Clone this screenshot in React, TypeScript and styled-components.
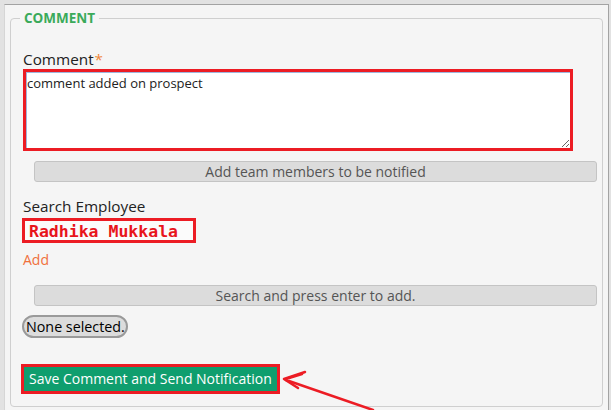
import React from "react";
import styled, { createGlobalStyle } from "styled-components";

const Global = createGlobalStyle`
  html, body {
    margin: 0;
    padding: 0;
    background: #e2e2e2;
    overflow: hidden;
  }
  body {
    font-family: "Open Sans", "Liberation Sans", sans-serif;
  }
`;

const Page = styled.div`
  position: relative;
  width: 611px;
  height: 410px;
  overflow: hidden;
`;

const Panel = styled.div`
  margin: 4px 2px 0 4px;
  background: #f5f5f5;
  border-top: 1px solid #a3a3a3;
  border-right: 1px solid #a3a3a3;
  border-left: 1px solid #d6d6d6;
  padding: 5px 5px 30px 5px;
`;

const Fieldset = styled.fieldset`
  margin: 0;
  min-width: 0;
  border: 1px solid #cfcfcf;
  border-radius: 4px;
  padding: 0 5px 12px 12px;
`;

const Legend = styled.legend`
  margin-left: -3px;
  padding: 0 4px;
  font-size: 13.5px;
  line-height: 16px;
  font-weight: 700;
  color: #3aaa5a;
`;

const Column = styled.div`
  display: flex;
  flex-direction: column;
  align-items: stretch;
`;

const Label = styled.label<{ $top: number }>`
  display: block;
  margin-top: ${(p) => p.$top}px;
  font-size: 15.3px;
  line-height: 19px;
  color: #222;
`;

const Required = styled.span`
  color: #f0883c;
  margin-left: 1px;
`;

const CommentArea = styled.textarea`
  display: block;
  box-sizing: border-box;
  width: 550px;
  height: 82px;
  margin: 0;
  border: 3px solid #ec1c24;
  box-shadow: inset 1px 1px 0 #9fb6dd;
  background: #fff;
  padding: 3px 1px;
  font-family: "Open Sans", "Liberation Sans", sans-serif;
  font-size: 13px;
  line-height: 16px;
  color: #222;
  resize: both;
  outline: none;
`;

const HintBar = styled.div<{ $top: number }>`
  box-sizing: border-box;
  margin: ${(p) => p.$top}px 0 0 11px;
  height: 21px;
  background: #dcdcdc;
  border: 1px solid #c4c4c4;
  border-radius: 3px;
  text-align: center;
  font-size: 14px;
  line-height: 19px;
  color: #555;
`;

const NameBox = styled.div`
  box-sizing: border-box;
  margin: 2px 0 0 -1px;
  width: 174px;
  height: 25px;
  border: 3px solid #ec1c24;
  background: #fbfbfb;
  padding: 2px 4px 0;
  font-family: "DejaVu Sans Mono", "Liberation Mono", monospace;
  font-weight: 700;
  font-size: 16.5px;
  line-height: 17px;
  color: #e8141c;
  white-space: nowrap;
`;

const AddLink = styled.a`
  align-self: flex-start;
  margin-top: 7px;
  font-size: 14px;
  line-height: 20px;
  color: #f0703c;
  text-decoration: none;
`;

const Pill = styled.span`
  align-self: flex-start;
  margin: 9px 0 0 -1px;
  border: 2px solid #9a9a9a;
  border-radius: 12px;
  background: #dcdcdc;
  padding: 0 1px 0 2px;
  font-size: 14.3px;
  line-height: 19px;
  color: #000;
`;

const SaveFrame = styled.div`
  align-self: flex-start;
  margin: 26px 0 0 -2px;
  border: 3px solid #ec1c24;
  display: flex;
`;

const SaveButton = styled.button`
  border: none;
  margin: 0;
  background: #0f9e6e;
  color: #fff;
  font-family: "Open Sans", "Liberation Sans", sans-serif;
  font-size: 14px;
  line-height: 24px;
  padding: 0 5px;
`;

const Annotation = styled.svg`
  position: absolute;
  left: 0;
  top: 0;
  pointer-events: none;
`;

export default function App() {
  return (
    <Page>
      <Global />
      <Panel>
        <Fieldset>
          <Legend>COMMENT</Legend>
          <Column>
            <Label $top={24}>
              Comment<Required>*</Required>
            </Label>
            <CommentArea defaultValue="comment added on prospect" />
            <HintBar $top={10}>Add team members to be notified</HintBar>
            <Label $top={15}>Search Employee</Label>
            <NameBox>Radhika Mukkala</NameBox>
            <AddLink href="#">Add</AddLink>
            <HintBar $top={15}>Search and press enter to add.</HintBar>
            <Pill>None selected.</Pill>
            <SaveFrame>
              <SaveButton type="button">Save Comment and Send Notification</SaveButton>
            </SaveFrame>
          </Column>
        </Fieldset>
      </Panel>
      <Annotation width="611" height="410" viewBox="0 0 611 410">
        <g stroke="#ec1c24" strokeWidth="2.5" fill="none" strokeLinecap="round" strokeLinejoin="round">
          <polyline points="305,372 284,379 298,388" />
          <line x1="286" y1="380" x2="373" y2="410" />
          <line x1="289" y1="378" x2="302" y2="374" />
        </g>
      </Annotation>
    </Page>
  );
}
